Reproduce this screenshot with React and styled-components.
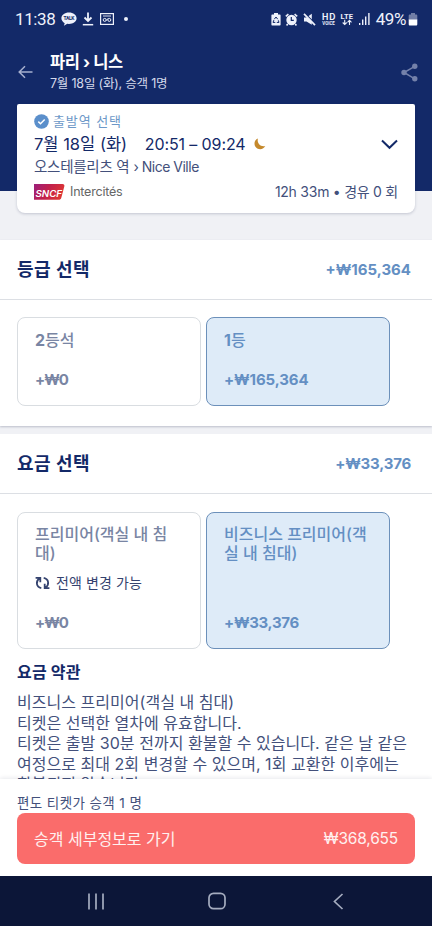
import React from 'react';
import styled, { createGlobalStyle, css } from 'styled-components';

const Global = createGlobalStyle`
  * { box-sizing: border-box; }
  body { margin: 0; background: #fff; }
`;

const latinFirst = `Inter, "Noto Sans CJK KR", sans-serif`;

const Screen = styled.div`
  width: 432px;
  height: 926px;
  display: flex;
  flex-direction: column;
  overflow: hidden;
  background: #f0f1f5;
  color: #132968;
  font-family: ${latinFirst};
`;

const Text = styled.span`
  display: block;
  white-space: pre;
  font-size: ${p => p.$size}px;
  line-height: ${p => p.$lh || 20}px;
  font-weight: ${p => p.$weight || 400};
  letter-spacing: ${p => p.$ls || 0}px;
  color: ${p => p.$color || 'inherit'};
`;

const Hero = styled.header`
  height: 240px;
  flex: none;
  background: linear-gradient(#132968 191px, #f0f1f5 191px);
`;

const StatusBar = styled.div`
  height: 38px;
  padding: 0 14px 0 15px;
  display: flex;
  align-items: center;
  justify-content: space-between;
  color: #eef1fb;
  font-family: Roboto, sans-serif;
`;

const StatusGroup = styled.div`
  display: flex;
  align-items: center;
  gap: ${p => p.$gap}px;
`;

const TopBar = styled.div`
  height: 66px;
  padding: 2px 14px 0 18px;
  display: flex;
  align-items: center;
`;

const Route = styled.div`
  flex: 1;
  margin: 0 0 0 17px;
`;

const TripCard = styled.section`
  height: 109px;
  margin: 0 17px;
  padding: 7px 17px 0;
  background: #fff;
  border-radius: 2px 2px 8px 8px;
  box-shadow: 0 1px 3px rgba(30, 40, 80, 0.22);
`;

const Row = styled.div`
  display: flex;
  align-items: center;
  height: ${p => p.$h}px;
  gap: ${p => p.$gap || 0}px;
`;

const Push = styled.div`
  margin-left: auto;
  display: flex;
`;

const Section = styled.section`
  height: ${p => p.$h}px;
  flex: none;
  background: #fff;
  ${p => p.$shadow && css`
    margin-bottom: 8px;
    box-shadow: 0 1px 2px rgba(30, 40, 80, 0.25);
  `}
`;

const SectionHead = styled.div`
  height: 60px;
  padding: 0 21px 0 17px;
  display: flex;
  align-items: center;
  justify-content: space-between;
  border-bottom: 1px solid #dcdfe4;
`;

const Options = styled.div`
  display: grid;
  grid-template-columns: 184px 184px;
  gap: 5px;
  padding: ${p => p.$top}px 17px 0;
`;

const Option = styled.button`
  height: ${p => p.$h}px;
  padding: 12px 17px 15px;
  display: flex;
  flex-direction: column;
  text-align: left;
  font-family: inherit;
  border-radius: 8px;
  border: 1px solid ${p => (p.$on ? '#6c90ba' : '#d9dde1')};
  background: ${p => (p.$on ? '#deebf8' : '#fff')};
  color: ${p => (p.$on ? '#648fc3' : '#7985a3')};
  & > :last-child { margin-top: auto; }
`;

const Terms = styled.div`
  padding: 13px 17px 0;
  color: #43507b;
`;

const Footer = styled.footer`
  height: 97px;
  flex: none;
  padding: 14px 17px 0;
  background: #fff;
  box-shadow: 0 -1px 4px rgba(30, 40, 80, 0.1);
  z-index: 1;
`;

const Continue = styled.button`
  width: 100%;
  height: 51px;
  padding: 0 17px;
  border: 0;
  border-radius: 8px;
  background: #fa6c6b;
  color: #fff0ef;
  display: flex;
  align-items: center;
  justify-content: space-between;
  font-family: inherit;
`;

const NavBar = styled.nav`
  height: 50px;
  flex: none;
  display: flex;
  align-items: center;
  justify-content: space-between;
  padding: 0 86px 0 87px;
  background: #0c1638;
  z-index: 1;
`;

const Strong = styled.b`
  font-weight: 700;
`;

const SvgText = styled.text`
  font-family: ${p => p.$family || 'Roboto, sans-serif'};
  font-size: ${p => p.$size}px;
  font-weight: ${p => p.$weight || 700};
  font-style: ${p => p.$style || 'normal'};
`;

const TalkIcon = () => (
  <svg width="16" height="14" viewBox="0 0 16 14">
    <path d="M8 .5C3.7.5.4 3 .4 6.3c0 2.1 1.4 3.9 3.3 4.900l-.8 2.600 3.400-2 1.700.2c4.300 0 7.600-2.500 7.600-5.700S12.300.5 8 .5Z" fill="#eef1fb" />
    <SvgText x="2.600" y="8.300" $size={5} textLength="10.800" fill="#132968">TALK</SvgText>
  </svg>
);

const DownloadIcon = () => (
  <svg width="12" height="14" viewBox="0 0 12 14" fill="none" stroke="#eef1fb">
    <path d="M6 .5v8M2.500 5.500 6 9l3.500-3.500" strokeWidth="1.800" />
    <path d="M.8 12.700h10.400" strokeWidth="1.500" />
  </svg>
);

const VoicemailIcon = () => (
  <svg width="14" height="12" viewBox="0 0 14 12" fill="none" stroke="#eef1fb">
    <rect x=".6" y=".6" width="12.800" height="10.800" strokeWidth="1.200" />
    <path d="M3 3h8M6 7.500l2.200-2" strokeWidth=".9" />
    <circle cx="4.700" cy="6.900" r="1.500" />
    <circle cx="9.300" cy="6.900" r="1.500" />
  </svg>
);

const BatterySaver = () => (
  <svg width="10" height="13" viewBox="0 0 10 13">
    <path d="M3 0h4v1.400h1.600c.6 0 1 .4 1 1v9.200c0 .6-.4 1-1 1H1.400c-.6 0-1-.4-1-1V2.400c0-.6.4-1 1-1H3Z" fill="#eef1fb" />
    <path d="M3.300 6.200 5 4l1.700 2.200M7.300 7.300 8 9.400H5.800M4.300 9.400H2l.9-2.300" fill="none" stroke="#132968" strokeWidth="1" />
  </svg>
);

const AlarmIcon = () => (
  <svg width="13" height="13" viewBox="0 0 13 13">
    <path d="m.8 3.300 2.600-2.200M12.200 3.300 9.600 1.100M2.700 11l-1.100 1.400M10.300 11l1.100 1.400" stroke="#eef1fb" strokeWidth="1.600" />
    <circle cx="6.500" cy="7" r="5.200" fill="#eef1fb" />
    <path d="M6.300 4v3.400h2.500" fill="none" stroke="#132968" strokeWidth="1.200" />
  </svg>
);

const MuteIcon = () => (
  <svg width="13" height="13" viewBox="0 0 13 13">
    <path d="M1 4.500h2.500L8.800.8v10.900L3.500 8.500H1Z" fill="#eef1fb" />
    <path d="M1.800.4 13 11.400" stroke="#132968" strokeWidth="1.400" />
    <path d="M1 .8 12 12.200" stroke="#eef1fb" strokeWidth="1.700" />
  </svg>
);

const HdIcon = () => (
  <svg width="15" height="14" viewBox="0 0 15 14" fill="#eef1fb">
    <SvgText x="1" y="7.600" $size={8.5} $family="Inter, sans-serif" $weight={700} textLength="13.500">HD</SvgText>
    <SvgText x="1.300" y="12.700" $size={4.7} textLength="12.500" lengthAdjust="spacingAndGlyphs">VOICE</SvgText>
  </svg>
);

const LteIcon = () => (
  <svg width="14" height="14" viewBox="0 0 14 14">
    <SvgText x=".5" y="6.500" $size={7.5} textLength="12.500" fill="#eef1fb">LTE</SvgText>
    <path d="M4.700 7.800v4.500M2.700 10.500l2 2 2-2M9.500 13V8.500M7.500 10.300l2-2 2 2" fill="none" stroke="#eef1fb" strokeWidth="1.100" />
  </svg>
);

const SignalIcon = () => (
  <svg width="12" height="12" viewBox="0 0 12 12" fill="#eef1fb">
    <path d="M0 10h1.400v2H0zM3 6.500h1.400V12H3zM6 3.500h1.400V12H6zM9.200 0h1.400v12H9.200z" />
  </svg>
);

const BatteryIcon = () => (
  <svg width="10" height="13" viewBox="0 0 10 13">
    <path d="M3 0h4v1.400h1c.8 0 1.300.5 1.300 1.300V7H.7V2.700c0-.8.500-1.300 1.300-1.300h1Z" fill="#717ea6" />
    <path d="M.7 6.500h8.600v4.700c0 .8-.5 1.300-1.300 1.300H2c-.8 0-1.300-.5-1.300-1.300Z" fill="#fff" />
  </svg>
);

const BackArrow = () => (
  <svg width="15" height="14" viewBox="0 0 15 14" fill="none" stroke="#a7b0ce" strokeWidth="1.500">
    <path d="M14.500 7H1.300M7 1.300 1.200 7 7 12.700" />
  </svg>
);

const ShareIcon = () => (
  <svg width="17" height="19" viewBox="0 0 17 19" fill="#7481aa">
    <path d="M13.800 3.300 3 9.500l10.800 6.300" fill="none" stroke="#7481aa" strokeWidth="1.500" />
    <circle cx="13.800" cy="3.300" r="2.700" />
    <circle cx="3" cy="9.500" r="2.700" />
    <circle cx="13.800" cy="15.700" r="2.700" />
  </svg>
);

const CheckIcon = () => (
  <svg width="15" height="15" viewBox="0 0 15 15">
    <circle cx="7.500" cy="7.500" r="7.300" fill="#5b8fcb" />
    <path d="m4.300 7.600 2.200 2.200 4.200-4.300" fill="none" stroke="#fff" strokeWidth="1.500" />
  </svg>
);

const MoonIcon = () => (
  <svg width="12" height="12" viewBox="0 0 12 12">
    <path d="M3.900.5C1.700 1.300.5 3.200.5 5.500c0 3.300 2.500 5.700 5.600 5.700 2.300 0 4.200-1.200 5.200-3.200C7 9.300 2.600 5.500 3.900.5Z" fill="#c5892c" />
  </svg>
);

const ChevronDown = () => (
  <svg width="17" height="11" viewBox="0 0 17 11" fill="none" stroke="#132968" strokeWidth="2">
    <path d="m1 1.500 7.500 7.300L16 1.500" />
  </svg>
);

const SncfLogo = () => (
  <svg width="31" height="16" viewBox="0 0 31 16">
    <defs>
      <linearGradient id="sncf" x1="0" y1="0" x2="1" y2="0.300">
        <stop offset="0" stopColor="#9b1f7c" />
        <stop offset=".5" stopColor="#c0204d" />
        <stop offset="1" stopColor="#dc3535" />
      </linearGradient>
    </defs>
    <path d="M0 0h28.500c1.500 0 2.200 1 1.800 2.400l-3 11.300c-.4 1.500-1.300 2.100-2.700 2.100H0Z" fill="url(#sncf)" />
    <SvgText x="1.500" y="12.700" $size={9.5} $weight={600} $style="italic" $family="Inter, sans-serif" textLength="26.500" lengthAdjust="spacingAndGlyphs" fill="#fff">SNCF</SvgText>
  </svg>
);

const ExchangeIcon = () => (
  <svg width="15" height="14" viewBox="0 0 15 14" fill="none" stroke="#35436f" strokeWidth="1.800">
    <path d="M.6 1.900h4.700v4.400M4.500 2.300C.4 5.400 1.100 11 6.300 12.100M14.400 12.100H9.700V7.700M10.500 11.700C14.600 8.600 13.900 3 8.700 1.900" />
  </svg>
);

const RecentsIcon = () => (
  <svg width="18" height="17" viewBox="0 0 18 17" stroke="#a5acbf" strokeWidth="1.700">
    <path d="M2 .5v16M9 .5v16M16 .5v16" />
  </svg>
);

const HomeIcon = () => (
  <svg width="18" height="18" viewBox="0 0 18 18" fill="none" stroke="#a5acbf" strokeWidth="1.700">
    <rect x="1" y="1.300" width="16" height="15.400" rx="4.500" />
  </svg>
);

const NavBack = () => (
  <svg width="17" height="17" viewBox="0 0 17 17" fill="none" stroke="#a5acbf" strokeWidth="1.700">
    <path d="M13.500 1 5.500 8.500l8 7.500" />
  </svg>
);

const Dot = styled.i`
  width: 4px;
  height: 4px;
  margin-left: 5px;
  border-radius: 50%;
  background: #eef1fb;
`;

const Perk = styled.div`
  display: flex;
  align-items: center;
  gap: 6px;
  margin-top: 10px;
  color: #35436f;
`;

const TermsTitle = styled.h3`
  margin: 0 0 10px;
  font-size: 16px;
  line-height: 20px;
  letter-spacing: 0.2px;
  color: #132968;
`;

const terms = [
  '비즈니스 프리미어(객실 내 침대)',
  '티켓은 선택한 열차에 유효합니다.',
  '티켓은 출발 30분 전까지 환불할 수 있습니다. 같은 날 같은',
  '여정으로 최대 2회 변경할 수 있으며, 1회 교환한 이후에는',
  '환불되지 않습니다.',
];

export default function App() {
  return (
    <Screen>
      <Global />
      <Hero>
        <StatusBar>
          <StatusGroup $gap={5.4}>
            <Text $size={17} $ls={-0.4}>11:38</Text>
            <TalkIcon />
            <DownloadIcon />
            <VoicemailIcon />
            <Dot />
          </StatusGroup>
          <StatusGroup $gap={4.7}>
            <BatterySaver />
            <AlarmIcon />
            <MuteIcon />
            <HdIcon />
            <LteIcon />
            <SignalIcon />
            <StatusGroup $gap={2}>
              <Text $size={17} $ls={-0.4}>49%</Text>
              <BatteryIcon />
            </StatusGroup>
          </StatusGroup>
        </StatusBar>
        <TopBar>
          <BackArrow />
          <Route>
            <Text $size={16.5} $lh={22} $weight={700} $ls={-0.4} $color="#fff">파리 › 니스</Text>
            <Text $size={12.5} $lh={21} $ls={-0.2} $color="#d5daeb">7월 18일 (화), 승객 1명</Text>
          </Route>
          <ShareIcon />
        </TopBar>
        <TripCard>
          <Row $h={20} $gap={4}>
            <CheckIcon />
            <Text $size={13} $ls={0.9} $color="#6c98c8">출발역 선택</Text>
          </Row>
          <Row $h={26}>
            <Text $size={16.5}>7월 18일 (화)</Text>
            <Text $size={16} $ls={-0.1}>    20:51 – 09:24  </Text>
            <MoonIcon />
            <Push><ChevronDown /></Push>
          </Row>
          <Row $h={20} $gap={4}>
            <Text $size={14.5} $ls={-0.25} $color="#43507b">오스테를리츠 역</Text>
            <Text $size={14} $ls={-0.5} $color="#43507b">› Nice Ville</Text>
          </Row>
          <Row $h={29} $gap={5}>
            <SncfLogo />
            <Text $size={12.5} $ls={-0.2} $color="#666">Intercités</Text>
            <Push><Text $size={14} $ls={-0.25} $color="#43507b">12h 33m • 경유 0 회</Text></Push>
          </Row>
        </TripCard>
      </Hero>

      <Section $h={186} $shadow>
        <SectionHead>
          <Text $size={18} $weight={700} $ls={0.5}>등급 선택</Text>
          <Text $size={15} $weight={700} $color="#648fc3">+₩165,364</Text>
        </SectionHead>
        <Options $top={17}>
          <Option $h={89}>
            <Text $size={16} $weight={500}><Strong>2</Strong>등석</Text>
            <Text $size={15} $weight={700} $ls={-1}>+₩0</Text>
          </Option>
          <Option $h={89} $on>
            <Text $size={16} $weight={500}><Strong>1</Strong>등</Text>
            <Text $size={15} $weight={700} $ls={-0.1}>+₩165,364</Text>
          </Option>
        </Options>
      </Section>

      <Section $h={345}>
        <SectionHead>
          <Text $size={18} $weight={700} $ls={0.5}>요금 선택</Text>
          <Text $size={15} $weight={700} $ls={-0.2} $color="#648fc3">+₩33,376</Text>
        </SectionHead>
        <Options $top={18}>
          <Option $h={137}>
            <Text $size={16} $weight={500} $lh={19}>{'프리미어(객실 내 침\n대)'}</Text>
            <Perk>
              <ExchangeIcon />
              <Text $size={14} $ls={0.1}>전액 변경 가능</Text>
            </Perk>
            <Text $size={15} $weight={700} $ls={-1}>+₩0</Text>
          </Option>
          <Option $h={137} $on>
            <Text $size={16} $weight={500} $lh={19}>{'비즈니스 프리미어(객\n실 내 침대)'}</Text>
            <Text $size={15} $weight={700} $ls={-0.3}>+₩33,376</Text>
          </Option>
        </Options>
        <Terms>
          <TermsTitle>요금 약관</TermsTitle>
          {terms.map(line => (
            <Text key={line} $size={16} $lh={20.5} $ls={0.03}>{line}</Text>
          ))}
        </Terms>
      </Section>

      <Footer>
        <Text $size={13.5} $ls={0.4} $color="#43507b">편도 티켓가 승객 1 명</Text>
        <Continue>
          <Text $size={16}>승객 세부정보로 가기</Text>
          <Text $size={15.5} $ls={-0.2}>₩368,655</Text>
        </Continue>
      </Footer>
      <NavBar>
        <RecentsIcon />
        <HomeIcon />
        <NavBack />
      </NavBar>
    </Screen>
  );
}
